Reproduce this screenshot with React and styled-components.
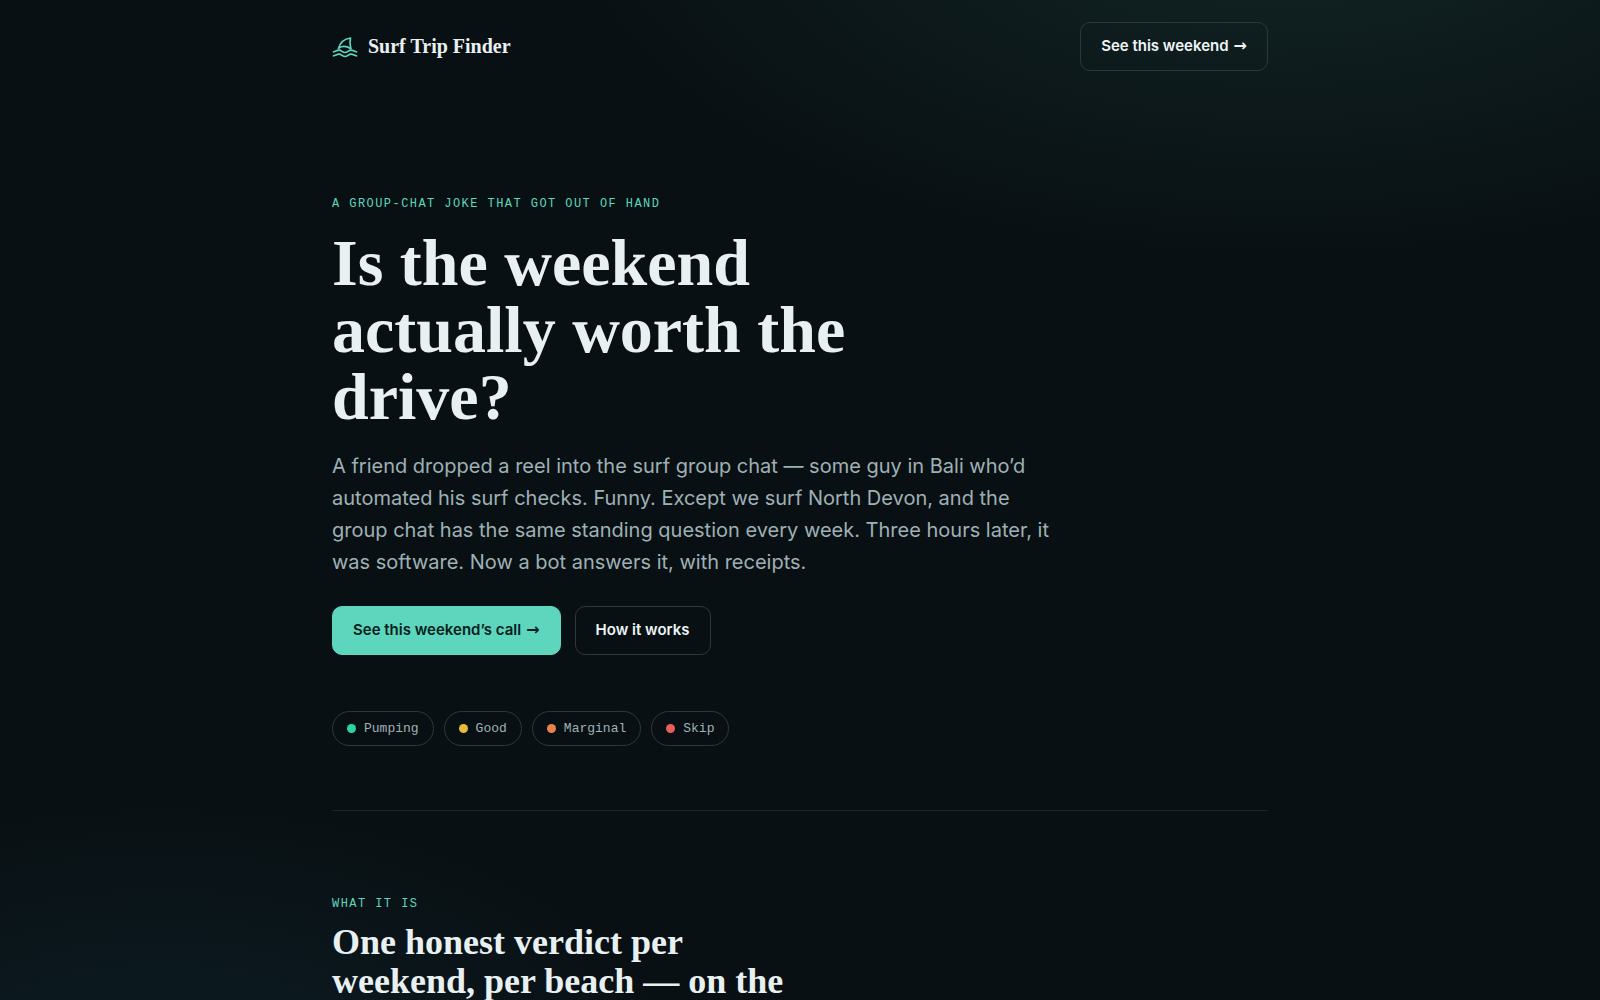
import styled, { createGlobalStyle } from "styled-components";

const GlobalStyle = createGlobalStyle`
  * {
    box-sizing: border-box;
  }
  html {
    background-color: #091013;
  }
  body {
    margin: 0;
    font-family: Inter, "Liberation Sans", sans-serif;
    color: #e8f0f2;
    min-height: 100vh;
    background-image:
      radial-gradient(1200px 600px at 80% -10%, rgba(94, 214, 190, 0.11), transparent 60%),
      radial-gradient(900px 500px at 10% 110%, rgba(40, 130, 170, 0.12), transparent 60%);
    background-size: 100vw 100vh;
    background-repeat: no-repeat;
  }
`;
const Center = styled.div`
  max-width: 1000px;
  margin: 0 auto;
  padding: 0 32px;
`;
const Header = styled.header`
  display: flex;
  align-items: center;
  justify-content: space-between;
  padding: 22px 0;
`;
const Brand = styled.a`
  display: flex;
  align-items: center;
  gap: 10px;
  color: #e8f0f2;
  font-family: "Liberation Serif", serif;
  font-size: 20px;
  font-weight: 700;
  text-decoration: none;
  svg {
    color: #5ed6be;
  }
`;
const Button = styled.a`
  display: inline-flex;
  align-items: center;
  gap: 5px;
  padding: 11px 20px 12px;
  border: 1px solid ${props => props.$primary ? "#5ed6be" : "#2a3941"};
  border-radius: 10px;
  background-color: ${props => props.$primary ? "#5ed6be" : "transparent"};
  color: ${props => props.$primary ? "#06201c" : "#eef5f6"};
  font-size: 15px;
  font-weight: 600;
  line-height: 24px;
  text-decoration: none;
  white-space: nowrap;
`;
const Arrow = styled.span`
  font-family: "DejaVu Sans", sans-serif;
  font-size: 16px;
`;
const Hero = styled.section`
  padding: 102px 0 64px;
  border-bottom: 1px solid #1b272c;
`;
const Section = styled.section`
  padding: 84px 0 0;
`;
const Eyebrow = styled.p`
  margin: 0;
  color: #5ed6be;
  font-family: "Liberation Mono", monospace;
  font-size: 12px;
  line-height: 18px;
  letter-spacing: 0.12em;
  text-transform: uppercase;
`;
const Title = styled.h1`
  max-width: 560px;
  margin: 16px 0 20px;
  font-family: "Liberation Serif", serif;
  font-size: 66px;
  font-weight: 700;
  line-height: 67px;
`;
const Lead = styled.p`
  max-width: 720px;
  margin: 0 0 28px;
  color: #9fb0b6;
  font-size: 20px;
  line-height: 32px;
`;
const Actions = styled.div`
  display: flex;
  flex-wrap: wrap;
  gap: 14px;
`;
const Legend = styled.ul`
  display: flex;
  flex-wrap: wrap;
  gap: 10px;
  margin: 56px 0 0;
  padding: 0;
  list-style: none;
`;
const Pill = styled.li`
  display: flex;
  align-items: center;
  gap: 8px;
  height: 35px;
  padding: 0 14px;
  border: 1px solid #2a3941;
  border-radius: 999px;
  color: #9fb0b6;
  font-family: "Liberation Mono", monospace;
  font-size: 13px;
  &::before {
    content: "";
    width: 9px;
    height: 9px;
    border-radius: 50%;
    background-color: ${props => props.$color};
  }
`;
const SectionTitle = styled.h2`
  max-width: 480px;
  margin: 10px 0 0;
  font-family: "Liberation Serif", serif;
  font-size: 36px;
  font-weight: 700;
  line-height: 39px;
`;

const verdicts = [
  { label: "Pumping", color: "#2dd4a0" },
  { label: "Good", color: "#e8b93a" },
  { label: "Marginal", color: "#e8834a" },
  { label: "Skip", color: "#e85d5d" },
];

function FinIcon() {
  return (
    <svg width="26" height="26" viewBox="0 0 26 26" fill="none" stroke="currentColor" strokeWidth="1.7" strokeLinecap="round" strokeLinejoin="round" aria-hidden="true">
      <path d="M6.5 14.5C8 9 12 4.800 18.500 4C17.700 7.500 17.800 11 18.800 14.500" />
      <path d="M6.800 14C10 12 14.500 12 18.600 14.500" />
      <path d="M1.500 17.800C3.500 17.800 4.500 16.200 7 16.200C9.500 16.200 10.500 18.500 13 18.500C15.500 18.500 16.500 16.200 19 16.200C21.500 16.200 22.500 17.800 24.500 17.800" />
      <path d="M1.500 21.800C3.500 21.800 4.500 20.200 7 20.200C9.500 20.200 10.500 22.500 13 22.500C15.500 22.500 16.500 20.200 19 20.200C21.500 20.200 22.500 21.800 24.500 21.800" />
    </svg>
  );
}

export default function App() {
  return (
    <>
      <GlobalStyle />
      <Center>
        <Header>
          <Brand href="#">
            <FinIcon />
            Surf Trip Finder
          </Brand>
          <Button href="#weekend">See this weekend <Arrow>→</Arrow></Button>
        </Header>
        <main>
          <Hero>
            <Eyebrow>A group-chat joke that got out of hand</Eyebrow>
            <Title>Is the weekend actually worth the drive?</Title>
            <Lead>
              A friend dropped a reel into the surf group chat — some guy in Bali who’d
              automated his surf checks. Funny. Except we surf North Devon, and the group
              chat has the same standing question every week. Three hours later, it was
              software. Now a bot answers it, with receipts.
            </Lead>
            <Actions>
              <Button $primary href="#weekend">See this weekend’s call <Arrow>→</Arrow></Button>
              <Button href="#what">How it works</Button>
            </Actions>
            <Legend>
              {verdicts.map(verdict => (
                <Pill key={verdict.label} $color={verdict.color}>{verdict.label}</Pill>
              ))}
            </Legend>
          </Hero>
          <Section id="what">
            <Eyebrow>What it is</Eyebrow>
            <SectionTitle>One honest verdict per weekend, per beach — on the</SectionTitle>
          </Section>
        </main>
      </Center>
    </>
  );
}
